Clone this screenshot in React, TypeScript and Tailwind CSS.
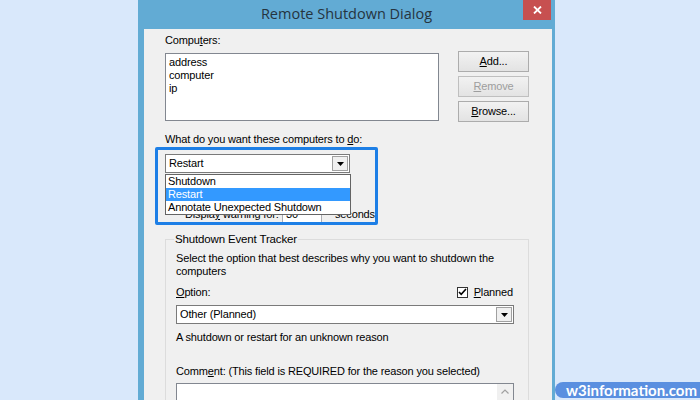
import React from "react";

const U = ({ children }: { children: React.ReactNode }) => <span className="underline underline-offset-[1px]">{children}</span>;

function Arrow() {
  return (
    <div className="flex h-full w-[16px] items-center justify-center border border-[#a0a0a0] bg-[#f0f0f0]">
      <svg width="7" height="4" viewBox="0 0 7 4"><path d="M0 0h7L3.5 4z" fill="#000" /></svg>
    </div>
  );
}

function Btn({ children, disabled }: { children: React.ReactNode; disabled?: boolean }) {
  return (
    <div
      className={`flex h-[21px] w-[71px] items-center justify-center border bg-gradient-to-b from-[#f2f2f2] to-[#e3e3e3] ${
        disabled ? "border-[#bfbfbf] text-[#9d9d9d]" : "border-[#acacac] text-black"
      }`}
    >
      {children}
    </div>
  );
}

export default function App() {
  return (
    <div
      className="flex h-[400px] w-[700px] overflow-hidden bg-[#d9e8fb] text-[11px] leading-[13px] tracking-[-0.15px] text-black"
      style={{ fontFamily: '"Liberation Sans", Arial, sans-serif' }}
    >
      <div className="ml-[138px] flex h-[400px] w-[417px] shrink-0 flex-col overflow-hidden bg-[#62abd4]">
        {/* title bar */}
        <div className="relative flex h-[29px] shrink-0 items-center justify-center">
          <span className="mt-[-2px] text-[14.5px] tracking-normal text-[#25343f]" style={{ fontFamily: '"Open Sans", "Noto Sans", sans-serif' }}>
            Remote Shutdown Dialog
          </span>
          <div className="absolute right-[4px] top-0 flex h-[20px] w-[28px] items-center justify-center bg-[#c75050]">
            <svg width="9" height="8" viewBox="0 0 9 8"><path d="M1 0.5L8 7.5M8 0.5L1 7.5" stroke="#fff" strokeWidth="1.8" /></svg>
          </div>
        </div>
        {/* client */}
        <div className="relative ml-[6px] mr-[3px] flex min-h-0 flex-1 flex-col overflow-hidden bg-[#f0f0f0] pl-[21px]">
          <div className="mt-[4px] h-[14px] shrink-0 leading-[14px]">Compu<U>t</U>ers:</div>
          <div className="mt-[4px] flex shrink-0">
            <div className="mt-[2px] flex h-[68px] w-[274px] flex-col border border-[#828790] bg-white pl-[3px] pt-[2px] leading-[13px]">
              <div>address</div>
              <div>computer</div>
              <div>ip</div>
            </div>
            <div className="ml-[19px] flex flex-col gap-[4px]">
              <Btn><U>A</U>dd...</Btn>
              <Btn disabled><U>R</U>emove</Btn>
              <Btn><U>B</U>rowse...</Btn>
            </div>
          </div>
          <div className="mt-[10px] h-[14px] shrink-0 leading-[14px]">What do you want these computers to <U>d</U>o:</div>
          <div className="mt-[8px] flex h-[19px] w-[185px] shrink-0 items-center border border-[#7a7a7a] bg-white p-[1px]">
            <span className="flex-1 pl-[2px]">Restart</span>
            <Arrow />
          </div>
          <div className="mt-[33px] flex h-[17px] shrink-0 items-center whitespace-nowrap">
            <span className="ml-[20px] w-[97px]">Displa<U>y</U> warning for:</span>
            <div className="h-[17px] w-[40px] border border-[#abadb3] bg-white pl-[3px] leading-[15px]">30</div>
            <span className="ml-[13px]">seconds</span>
          </div>

          {/* group box */}
          <div className="relative mr-[23px] mt-[16px] flex shrink-0 flex-col border border-[#dcdcdc] pl-[10px] pr-[14px] pt-[12px]">
            <span className="absolute left-[8px] top-[-8px] bg-[#f0f0f0] px-[1px] text-[11.5px] leading-[14px]">Shutdown Event Tracker</span>
            <div className="leading-[13px]">
              Select the option that best describes why you want to shutdown the computers
            </div>
            <div className="mt-[7px] flex h-[14px] items-center">
              <span className="flex-1"><U>O</U>ption:</span>
              <div className="mr-[6px] flex h-[11px] w-[11px] items-center justify-center border border-[#333] bg-white">
                <svg width="9" height="8" viewBox="0 0 9 8"><path d="M1 4l2.2 2.4L8 1" stroke="#000" strokeWidth="1.6" fill="none" /></svg>
              </div>
              <span className="mr-[1px]"><U>P</U>lanned</span>
            </div>
            <div className="mt-[6px] flex h-[19px] items-center border border-[#7a7a7a] bg-white p-[1px]">
              <span className="flex-1 pl-[2px]">Other (Planned)</span>
              <Arrow />
            </div>
            <div className="mt-[6px] h-[14px] leading-[14px]">A shutdown or restart for an unknown reason</div>
            <div className="mt-[20px] h-[14px] whitespace-nowrap leading-[14px]">Comm<U>e</U>nt: (This field is REQUIRED for the reason you selected)</div>
            <div className="mt-[5px] flex h-[40px] justify-end border border-[#828790] bg-white">
              <div className="flex w-[16px] justify-center bg-[#f0f0f0] pt-[5px]">
                <svg width="8" height="5" viewBox="0 0 8 5"><path d="M0.5 4.5L4 1L7.5 4.5" stroke="#a0a0a0" strokeWidth="1.2" fill="none" /></svg>
              </div>
            </div>
          </div>

          {/* dropdown list overlay */}
          <div className="absolute left-[21px] top-[145px] flex w-[186px] flex-col border border-[#646464] bg-white">
            <div className="h-[13px] pl-[2px] leading-[13px]">Shutdown</div>
            <div className="h-[13px] bg-[#3399ff] pl-[2px] leading-[13px] text-white">Restart</div>
            <div className="h-[13px] pl-[2px] leading-[13px]">Annotate Unexpected Shutdown</div>
          </div>
          {/* highlight */}
          <div className="absolute left-[11px] top-[118px] h-[78px] w-[223px] rounded-[2px] border-[3px] border-[#1d7fe6]" />
        </div>
      </div>
      <div className="ml-auto mr-[3px] mt-[382px] flex h-[16px] w-[153px] shrink-0 items-center justify-center rounded-full bg-[#5a8fe0]">
        <span className="text-[15px] font-bold leading-[16px] tracking-normal text-white" style={{ fontFamily: '"Lato", "Open Sans", sans-serif' }}>
          w3information.com
        </span>
      </div>
    </div>
  );
}
